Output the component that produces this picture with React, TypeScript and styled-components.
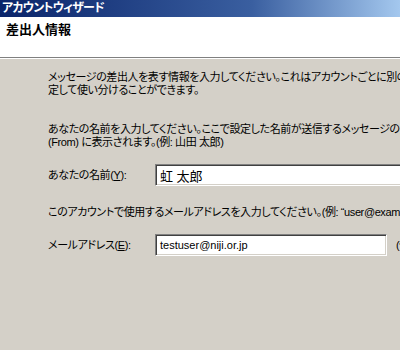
import React from "react";
import styled, { createGlobalStyle } from "styled-components";

const GlobalStyle = createGlobalStyle`
  html, body {
    margin: 0;
    padding: 0;
    background: #d4d0c8;
    overflow: hidden;
  }
  body {
    font-family: "Liberation Sans", "Noto Sans CJK JP", sans-serif;
    font-feature-settings: "palt";
  }
`;

const Wizard = styled.div`
  width: 560px;
  height: 350px;
  display: flex;
  flex-direction: column;
  background: #d4d0c8;
  color: #000;
`;

const TitleBar = styled.div`
  height: 17px;
  padding-left: 2px;
  background: linear-gradient(to right, #0a246a 0%, #3a5fa0 45%, #a6caf0 72%);
  color: #fff;
  font-size: 12px;
  font-weight: bold;
  letter-spacing: -0.8px;
  line-height: 17px;
  white-space: nowrap;
`;

const Header = styled.div`
  height: 41px;
  background: #fff;
  border-bottom: 1px solid #808080;
  box-shadow: 0 1px 0 #fff;
  padding: 5px 6px 0;
  box-sizing: border-box;
`;

const Heading = styled.h1`
  margin: 0;
  font-size: 13px;
  font-weight: bold;
  line-height: 16px;
`;

const Body = styled.div`
  padding: 13px 0 0 48px;
  display: flex;
  flex-direction: column;
  font-size: 11px;
  letter-spacing: -0.4px;
`;

const Paragraph = styled.p<{ $gap?: number }>`
  margin: 0 0 ${(p) => p.$gap ?? 0}px;
  line-height: 13px;
  white-space: nowrap;
`;

const FieldRow = styled.div<{ $gap?: number }>`
  display: flex;
  align-items: center;
  gap: 9px;
  margin-bottom: ${(p) => p.$gap ?? 0}px;
`;

const Label = styled.label`
  width: 107px;
  margin-right: -9px;
  flex-shrink: 0;
  line-height: 13px;
  white-space: nowrap;
`;

const Key = styled.span`
  text-decoration: underline;
`;

const TextBox = styled.div<{ $width: number }>`
  width: ${(p) => p.$width}px;
  height: 22px;
  box-sizing: border-box;
  flex-shrink: 0;
  background: #fff;
  border-top: 1px solid #808080;
  border-left: 1px solid #808080;
  border-bottom: 1px solid #fff;
  border-right: 1px solid #fff;
  box-shadow: inset 1px 1px 0 #404040, inset -1px -1px 0 #d4d0c8;
  padding: 0 4px;
  display: flex;
  align-items: center;
  letter-spacing: 0;
  white-space: nowrap;
`;

const NameText = styled.span`
  font-size: 13px;
`;

const MailText = styled.span`
  font-family: "Liberation Sans", sans-serif;
  font-size: 11px;
`;

const Hint = styled.span`
  white-space: nowrap;
  line-height: 13px;
`;

export default function App() {
  return (
    <>
      <GlobalStyle />
      <Wizard>
        <TitleBar>アカウントウィザード</TitleBar>
        <Header>
          <Heading>差出人情報</Heading>
        </Header>
        <Body>
          <Paragraph $gap={26}>
            メッセージの差出人を表す情報を入力してください。これはアカウントごとに別の情報を設
            <br />
            定して使い分けることができます。
          </Paragraph>
          <Paragraph $gap={15}>
            あなたの名前を入力してください。ここで設定した名前が送信するメッセージの差出人欄
            <br />
            (From) に表示されます。(例: 山田 太郎)
          </Paragraph>
          <FieldRow $gap={20}>
            <Label>
              あなたの名前(<Key>Y</Key>):
            </Label>
            <TextBox $width={300}>
              <NameText>虹 太郎</NameText>
            </TextBox>
          </FieldRow>
          <Paragraph $gap={15}>
            このアカウントで使用するメールアドレスを入力してください。(例: “user@example.net”)
          </Paragraph>
          <FieldRow>
            <Label>
              メールアドレス(<Key>E</Key>):
            </Label>
            <TextBox $width={232}>
              <MailText>testuser@niji.or.jp</MailText>
            </TextBox>
            <Hint>(例: user@example.net)</Hint>
          </FieldRow>
        </Body>
      </Wizard>
    </>
  );
}
